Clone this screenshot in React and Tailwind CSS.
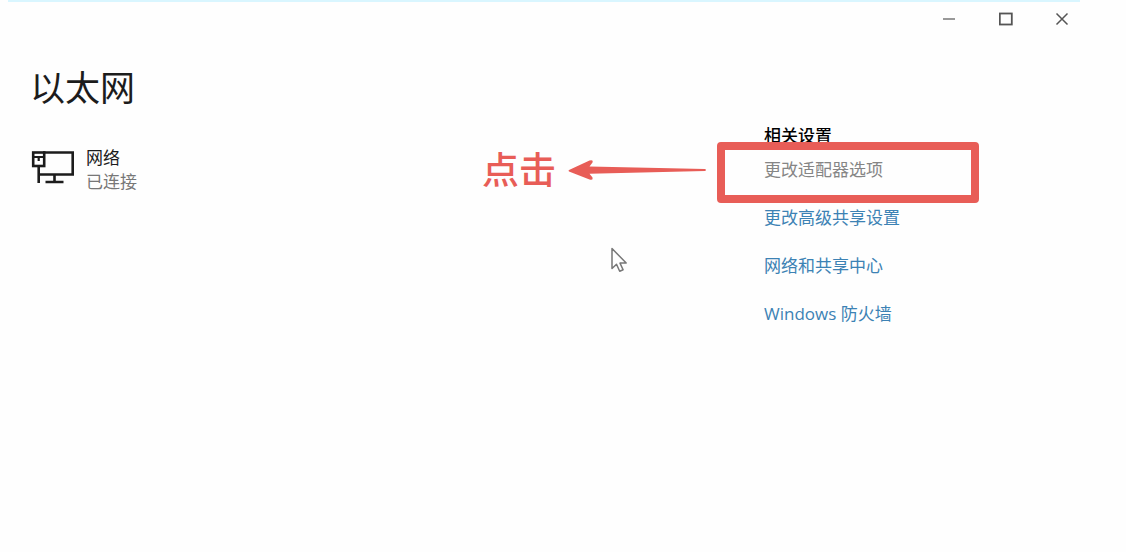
import React from "react";

const links = ["更改高级共享设置", "网络和共享中心", "Windows 防火墙"];

function TitleBar() {
  return (
    <header className="flex justify-end gap-5 border-t-2 border-[#d9f6ff]">
      <button aria-label="最小化" className="flex h-[34px] w-9 items-center justify-center">
        <svg width="14" height="14" viewBox="0 0 14 14" fill="none" stroke="#777" strokeWidth="1.5">
          <path d="M0 7h12" />
        </svg>
      </button>
      <button aria-label="最大化" className="flex h-[34px] w-9 items-center justify-center">
        <svg width="14" height="14" viewBox="0 0 14 14" fill="none" stroke="#555" strokeWidth="1.8">
          <rect x="0.8" y="1.5" width="12" height="11" />
        </svg>
      </button>
      <button aria-label="关闭" className="flex h-[34px] w-9 items-center justify-center">
        <svg width="14" height="14" viewBox="0 0 14 14" fill="none" stroke="#555" strokeWidth="1.5">
          <path d="M1.5 1.5l11 11M12.5 1.5l-11 11" />
        </svg>
      </button>
    </header>
  );
}

function EthernetIcon() {
  return (
    <svg width="44" height="34" viewBox="0 0 44 34" fill="none" stroke="#1c1c1c" strokeWidth="2.6">
      <path d="M13 2.5h29.7v22H9" />
      <rect x="3.2" y="2.5" width="11" height="13.5" />
      <path d="M3 7h11M8.7 7v4" strokeWidth="2.2" />
      <path d="M8.7 16v17M24.5 24.5v7.5M15.5 32h18" />
    </svg>
  );
}

// red "click" note with the arrow that starts at the highlighted link
function ClickNote() {
  return (
    <div className="pointer-events-none absolute right-full top-1/2 mr-[57px] flex -translate-y-1/2 items-center gap-3 whitespace-nowrap text-[#e85d57]">
      <span className="text-[37px] leading-10 font-medium">点击</span>
      <svg width="139" height="22" viewBox="0 0 139 22" fill="currentColor">
        <path d="M1 11L21.5 1.6Q25.5 0.5 24.5 3.5L21.5 7.5L137 10Q139 11 137 12L21.5 14.8L24.5 18.5Q25.5 21.8 21.5 20.5L1 12.5Q0 11.7 1 11Z" />
      </svg>
    </div>
  );
}

function Cursor() {
  return (
    <svg
      className="pointer-events-none absolute right-full top-[89px] mr-[136px]"
      width="18"
      height="26"
      viewBox="0 0 18 26"
      fill="#fff"
      stroke="#777"
      strokeWidth="1.5"
      strokeLinejoin="round"
    >
      <path d="M2 1.5v20l4.5-4.2 3.2 7 3.4-1.6-3.1-6.6h6.2z" />
    </svg>
  );
}

export default function App() {
  return (
    <div className="min-h-screen bg-[#fefefe] pl-2 pr-[46px] font-['Open_Sans','Noto_Sans_CJK_SC',sans-serif] text-[17px] leading-6 text-[#1c1c1c]">
      <TitleBar />
      <div className="flex justify-between">
        <main className="pl-[22px] pt-8">
          <h1 className="text-[35px] leading-10">以太网</h1>
          <div className="mt-[38px] flex items-start gap-3">
            <div className="pt-1">
              <EthernetIcon />
            </div>
            <div>
              <p>网络</p>
              <p className="text-[#777]">已连接</p>
            </div>
          </div>
        </main>

        <aside className="w-[316px] pt-[88px]">
          <h2 className="font-medium text-black">相关设置</h2>
          <ul className="mt-[10px] flex flex-col gap-6">
            <li className="relative">
              <a href="#adapter" className="text-[#858585]">更改适配器选项</a>
              <div className="pointer-events-none absolute -left-[47px] -top-4 h-[61px] w-[262px] rounded border-8 border-[#e85d57]" />
              <ClickNote />
              <Cursor />
            </li>
            {links.map((text) => (
              <li key={text}>
                <a href="#settings" className="text-[#3c82b4]">{text}</a>
              </li>
            ))}
          </ul>
        </aside>
      </div>
    </div>
  );
}
